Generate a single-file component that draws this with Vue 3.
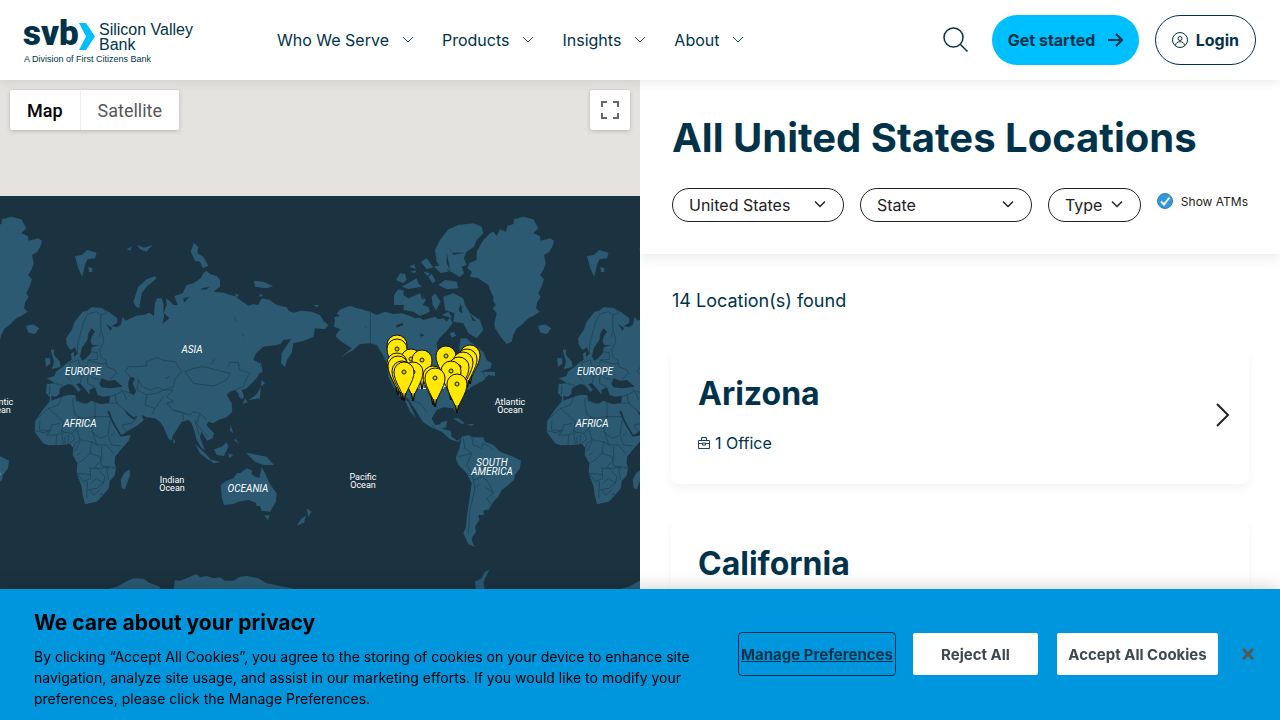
<script setup>
const nav = ['Who We Serve', 'Products', 'Insights', 'About']
const filters = [
  { id: 'country', label: 'Country', value: 'United States', cls: 'wide' },
  { id: 'state', label: 'State', value: 'State', cls: 'wide' },
  { id: 'type', label: 'Location type', value: 'Type', cls: 'narrow' },
]
const states = [
  { name: 'Arizona', offices: '1 Office', cls: '' },
  { name: 'California', offices: '', cls: 'tall' },
]
const pins = [
  [397, 345], [397, 349], [411, 359], [422, 360], [446, 356], [470, 355], [467, 359],
  [463, 362], [397, 363], [398, 366], [459, 367], [451, 371], [413, 372], [402, 371],
  [404, 372], [433, 376], [435, 378], [457, 384],
]
const worldOffsets = [-512, 0, 512]
const oceanLabels = [
  [-2, 'Atlantic', 'Ocean', 405], [510, 'Atlantic', 'Ocean', 405],
  [172, 'Indian', 'Ocean', 483], [363, 'Pacific', 'Ocean', 480],
]
const landLabels = [
  [192, 353, 'ASIA'], [83, 375, 'EUROPE'], [595, 375, 'EUROPE'], [80, 427, 'AFRICA'],
  [592, 427, 'AFRICA'], [248, 492, 'OCEANIA'], [492, 466, 'SOUTH'], [492, 475, 'AMERICA'],
  [-20, 475, 'AMERICA'], [428, 380, 'NORTH'], [428, 389, 'AMERICA'],
]
</script>

<template>
  <div class="page">
    <header class="top">
      <a class="logo" href="#" aria-label="Silicon Valley Bank home">
        <svg width="170" height="50" viewBox="0 0 170 50">
          <text class="logo-mark" x="-1" y="30">svb</text>
          <path d="M55 8h7l9 13.500-9 13.500h-7l7-13.500z" fill="#00bfff" />
          <text class="logo-name" x="75" y="20">Silicon Valley</text>
          <text class="logo-name" x="75" y="35">Bank</text>
          <text class="logo-sub" x="0" y="47">A Division of First Citizens Bank</text>
        </svg>
      </a>
      <nav class="nav">
        <button v-for="n in nav" :key="n" type="button">
          {{ n }}
          <svg width="12" height="8" viewBox="0 0 12 8"><path d="M1 1l5 5 5-5" fill="none" stroke="#1c4357" /></svg>
        </button>
      </nav>
      <div class="actions">
        <button class="search" type="button" aria-label="Search">
          <svg width="26" height="26" viewBox="0 0 26 26" fill="none" stroke="#00334a" stroke-width="1.500"><circle cx="10.500" cy="10.500" r="9.500" /><path d="M17.500 17.500l7 7" /></svg>
        </button>
        <a class="started" href="#">Get started
          <svg width="15" height="14" viewBox="0 0 15 14" fill="none" stroke="#00334a" stroke-width="2"><path d="M0 7h13M8 1l6 6-6 6" /></svg>
        </a>
        <a class="login" href="#">
          <svg width="16" height="16" viewBox="0 0 16 16" fill="none" stroke="#00334a"><circle cx="8" cy="8" r="7.500" /><circle cx="8" cy="6.500" r="2" /><path d="M3.500 13.500c0-5 9-5 9 0" /></svg>
          Login
        </a>
      </div>
    </header>

    <main class="main">
      <section class="map" aria-label="Locations map">
        <svg class="world" viewBox="0 80 640 640" preserveAspectRatio="xMidYMin slice">
          <rect x="-700" y="80" width="2040" height="116" fill="#e5e3df" />
          <rect x="-700" y="196" width="2040" height="600" fill="#1b3240" />
          <defs>
            <g id="continents">
              <g transform="translate(0 190) scale(.33333)">
                <g class="land">
                  <path d="M200 465L198 445 215 420 224 395 248 365 262 362 275 352 305 354 330 368 352 385 352 398 335 408 350 412 362 405 368 380 376 392 400 382 412 376 430 375 448 368 462 378 464 345 470 325 485 325 492 345 490 370 500 345 498 325 512 335 520 345 533 345 523 318 548 310 560 285 580 280 602 265 610 250 620 242 630 252 650 258 660 270 660 290 640 305 672 308 690 315 705 318 720 330 745 347 760 342 775 345 785 325 810 330 830 345 860 352 866 362 880 368 905 362 935 365 960 375 970 392 985 405 975 418 945 415 940 440 918 450 900 455 880 460 875 490 862 508 855 530 843 520 845 490 865 460 874 447 850 450 842 462 830 465 790 470 768 490 760 510 780 520 784 540 770 565 750 585 738 596 725 600 732 618 728 628 718 622 715 610 705 600 690 605 680 615 695 640 697 665 680 682 655 690 640 700 625 695 620 705 630 718 642 730 638 745 622 752 612 738 605 725 600 740 607 762 615 780 605 775 590 750 582 720 575 700 565 690 545 695 530 720 518 738 515 752 505 745 490 710 480 695 465 685 440 682 425 675 431 690 415 705 380 725 364 735 352 715 338 690 328 662 322 665 340 705 362 740 392 735 386 752 370 770 345 800 344 820 348 835 344 858 330 872 326 895 310 915 290 935 255 943 248 915 245 890 230 850 232 820 218 795 220 775 210 762 180 765 145 766 130 760 118 745 104 725 106 692 130 657 148 636 150 622 138 610 140 582 165 580 140 565 163 558 168 545 188 530 205 515 215 510 213 490 222 486 222 500 232 492 225 472 212 480z" />
                  <path d="M225 198L245 195 262 180 290 188 285 205 262 208 255 225 247 262 235 235zM265 232l12 2v12h-10zM400 335L415 290 440 268 465 258 470 265 440 290 425 310 418 355 408 350zM380 178l15-8-4 12zM412 165l20 8 25-8-18 20-20-8zM572 185L582 158 595 172 592 190 610 200 625 228 608 235 600 215 585 212zM762 272L790 275 820 288 800 295 765 290zM780 310l10 8-12 2zM705 310l12 5-8 8zM940 345h18l-8 7zM78 408L100 403 118 415 105 432 85 428zM152 480L162 478 162 495 180 515 182 530 155 538 162 515zM135 505L150 503 152 520 138 530zM785 570L795 580 782 590zM782 592L780 625 745 630 760 620 770 612zM735 625l8 12-15 4zM782 510L788 545 780 550zM692 705L700 730 690 722zM705 745L717 760 703 752zM642 778L665 770 680 757 685 770 672 798 650 795zM585 762L605 780 630 805 628 812 600 790zM628 808L662 816 640 820zM685 790L700 795 688 805zM738 788L760 792 800 800 822 825 790 825 765 815 750 800zM662 885L680 872 700 865 712 848 720 850 740 835 757 842 754 852 762 858 778 865 785 832 795 850 808 880 830 910 828 935 810 965 785 962 780 948 770 948 768 938 745 930 715 935 700 942 672 945 665 920zM793 975L810 977 802 990zM920 955L935 965 925 980zM890 1007L905 985 918 978 912 998zM362 870L372 850 388 838 390 855 375 898 365 895zM520 745l6 10-6 6z" />
                  <path d="M315 1200L350 1190 372 1178 400 1165 430 1166 448 1178 480 1190 478 1200 520 1200 525 1170 540 1172 560 1165 590 1152 600 1162 620 1158 640 1165 660 1162 675 1172 700 1172 720 1160 740 1158 775 1165 800 1180 860 1192 900 1200 900 1600 315 1600z" />
                </g>
                <g class="water">
                  <path d="M154 618L168 620 178 612 180 595 192 588 205 582 218 585 235 605 243 600 228 583 240 580 262 605 270 615 268 600 285 592 293 615 310 620 330 618 328 640 300 642 275 632 262 640 250 640 228 632 226 615 200 615 154 632zM298 582L305 565 325 572 345 570 368 590 330 595 305 592zM385 575L392 560 405 565 398 580 408 605 400 615 390 608 385 590zM240 500L245 475 262 450 265 430 275 415 285 425 275 440 272 455 278 466 298 465 275 472 272 490 258 505 248 512zM490 325L497 330 492 370 508 385 487 402 492 380zM372 658L400 682 414 678 402 690 382 675zM318 402l18 12-4 8zM600 298l12-5 16-2-10 8zM550 325l18-5-16 18zM640 700l12 0-8 8z" />
                </g>
                <g class="line">
                  <path d="M232 492L232 465 250 400 262 372 290 365 302 375 303 425 298 440M302 375L320 370 315 362M305 425L312 455 298 480 305 505 318 510 320 530 345 540 350 550 330 568M270 485L292 488 292 508 265 510 262 530 240 530 235 510M235 510L205 520M205 535L200 560 215 575M232 530L225 548 245 560 265 550 280 565 300 568M245 560L240 580M265 550L262 580 285 592M165 580L190 588M150 585L148 615M210 520L212 560M265 510L300 522 318 520" />
                  <path d="M390 562L376 545 385 530 410 530 440 528 440 515 470 503 495 512 525 515 545 545 525 568 520 590 490 600 475 592 450 600 425 590 415 568M555 545L580 535 610 530 650 540 690 550 680 570 640 588 580 580 555 545M685 530L690 517 715 517 718 540 750 550 738 570 730 590 705 600M495 565L510 560M415 568L412 600 440 615 470 610 490 600 520 600 500 620 520 635 500 640 520 660 570 675 580 665 600 670 620 690M440 615L435 645 465 655 490 620M465 655L455 675M415 590L395 610 370 602 345 615 328 620M345 615L350 640 375 660M360 595L372 610 380 630M330 640L355 638M600 670L590 700 605 720 625 740M585 690L598 735M520 660L548 668 550 690M380 725L365 705 395 700 410 685M632 525L645 505M705 380l3 15M725 430l8 10" />
                  <path d="M185 620L175 645 145 655M145 655L108 690M145 655L190 695 220 690M220 625L218 640 225 675 245 685 285 680 330 680M285 635L285 690M190 695L185 725 215 730 230 715 235 680M120 690L118 720 150 722 155 705 180 700M104 722L130 728 150 722M150 722L140 735 170 735 168 765M170 735L185 728 190 762M215 730L225 745 210 762M230 715L240 750 225 760 220 775M240 750L275 755 290 765 275 715 285 690M240 755L225 785M275 755L270 790 250 810 232 820M275 725L300 745 325 735 330 690M330 740L345 725M325 740L335 765 365 768M290 765L320 765 340 790M305 770L305 810 285 830M270 790L300 800 305 828 330 835M270 830L272 865 250 875 232 850M232 850L272 855M272 835L305 835 320 828 348 835M285 830L300 845 315 860 310 880 290 865 272 880M262 875L260 925M260 900L290 895 310 880M270 900L280 915 300 900M320 830L325 870M205 735v28M195 740v20M250 620L250 640M240 790L230 795M298 915l8-5 3 7" />
                </g>
              </g>
              <g transform="translate(320 190) scale(.33333)">
                <g class="land">
                  <path d="M45 390L42 382 60 378 50 370 62 358 90 347 110 355 125 358 150 365 170 375 195 365 220 372 245 370 270 378 285 385 300 383 310 390 330 385 345 380 355 388 370 385 380 395 390 382 398 400 378 425 358 445 350 460 352 480 380 482 390 500 400 520 420 500 418 470 422 445 440 445 450 455 470 470 490 485 500 510 515 520 512 535 480 545 525 545 525 558 505 555 490 572 455 590 430 610 410 640 417 665 408 668 400 655 370 652 350 660 335 685 345 705 360 703 365 695 382 693 378 712 368 718 392 722 395 740 412 752 425 742 415 756 390 748 365 725 330 710 308 695 290 665 262 625 240 620 220 590 205 560 200 520 185 490 170 465 150 460 120 462 100 480 62 502 95 475 65 455 48 440 50 430 62 418 42 410z" />
                  <path d="M252 625L265 635 288 683 270 665zM222 315L235 298 252 302 250 315 265 325 300 310 318 330 308 345 325 350 330 365 300 378 280 365 250 360 252 345 222 345zM345 180L360 150 385 118 415 105 460 100 485 110 490 130 470 150 462 170 440 185 432 205 440 225 425 230 432 250 420 262 385 240 365 235 350 215zM370 320L400 310 430 325 435 345 450 370 480 390 490 420 470 445 445 430 430 400 400 395 404 370 375 360zM228 270L240 250 255 252 260 270 250 280zM245 290L290 265 295 280 305 290 265 297zM302 215L320 205 340 232 320 238zM342 230l20 -5 25 20-25 4zM325 260l10-8 12 20-10 8zM355 285L375 270 410 275 415 295 380 298zM268 230l15-8 4 15zM335 320L345 310 362 335 348 362 338 345zM365 375l20-10 12 20zM390 430l12-5 6 12-14 6zM310 245l20 4-6 10zM270 245l20-5-5 10z" />
                  <path d="M470 185L490 150 510 130 520 125 530 138 540 118 558 125 562 108 580 102 582 88 610 80 640 88 655 115 640 130 660 138 662 152 690 145 702 152 698 168 688 185 672 195 677 220 670 240 660 255 672 268 665 290 655 308 662 322 652 335 648 355 660 365 640 378 625 385 605 405 590 415 580 435 575 455 560 462 545 445 525 415 523 400 530 370 518 355 528 345 520 335 520 320 510 300 505 285 475 265 450 260 455 245 442 235 448 220 470 210z" />
                  <path d="M425 740L445 735 460 742 490 742 495 755 520 765 540 785 580 800 603 812 600 835 585 855 582 870 565 885 545 900 535 920 520 935 508 958 490 962 492 975 475 975 478 990 465 1010 468 1025 455 1045 458 1060 465 1072 445 1062 430 1030 438 1010 440 985 448 930 455 880 440 850 415 825 407 805 418 775zM398 685L415 685 435 700 425 701zM440 702h22l-8 6zM468 1200L465 1175 485 1165 495 1145 508 1140 495 1165 490 1180 495 1200z" />
                </g>
                <g class="water">
                  <path d="M228 405l20-6 2 6-20 8zM300 430l14 6-12 4zM385 170l10 18 40 0-35 6zM380 185l10 55-10-20zM300 300l12 30-8-5zM420 340l8 30-10-5zM450 372l18 22-10-2zM415 355l15-8-10 18z" />
                </g>
                <g class="line">
                  <path d="M151 365V460L175 475 195 505M205 550L350 550 400 565 450 570M255 625L300 640 320 665M335 705L345 715M455 740L460 765 485 775 490 760 500 765 520 780M430 745L435 775 455 790 415 800M455 790L440 825 455 850 460 870 490 860 510 885 520 910 500 925 515 945 508 955M460 870L465 895 450 960 445 1030M480 880L465 895M495 890L520 910M365 715L378 712M135 408l5 6M488 545l8 18" />
                </g>
              </g>
            </g>
            <g id="pin">
              <path d="M0 29C-1 19-10 10-10 0A10 10 0 0 1 10 0C10 10 1 19 0 29z" fill="#ffe900" stroke="#111" />
              <path d="M-2 21h4L1 29h-2z" fill="#111" />
              <path d="M-1 20h2L0 26z" fill="#ffe900" />
              <circle r="2" fill="#e5d100" stroke="#111" />
            </g>
          </defs>
          <use v-for="o in worldOffsets" :key="o" href="#continents" :x="o" />
          <g class="ocean-label">
            <g v-for="l in oceanLabels" :key="l[0]">
              <text :x="l[0]" :y="l[3]">{{ l[1] }}</text>
              <text :x="l[0]" :y="l[3] + 8">{{ l[2] }}</text>
            </g>
          </g>
          <g class="land-label">
            <text v-for="(l, i) in landLabels" :key="i" :x="l[0]" :y="l[1]">{{ l[2] }}</text>
          </g>
          <use v-for="(p, i) in pins" :key="i" href="#pin" :x="p[0]" :y="p[1]" />
        </svg>
        <div class="map-types">
          <button class="on" type="button">Map</button>
          <button type="button">Satellite</button>
        </div>
        <button class="fullscreen" type="button" aria-label="Toggle fullscreen">
          <svg width="18" height="18" viewBox="0 0 18 18" fill="none" stroke="#666" stroke-width="2"><path d="M1 6V1h5M12 1h5v5M17 12v5h-5M6 17H1v-5" /></svg>
        </button>
      </section>

      <section class="panel">
        <div class="filters">
          <h1>All United States Locations</h1>
          <div class="row">
            <div v-for="f in filters" :key="f.id" class="pick" :class="f.cls">
              <select :id="f.id" :aria-label="f.label"><option>{{ f.value }}</option></select>
              <svg width="14" height="9" viewBox="0 0 14 9"><path d="M2 1.500l5 5 5-5" fill="none" stroke="#222" stroke-width="1.500" /></svg>
            </div>
            <label class="atms" for="atms">
              <span class="box">
                <input id="atms" type="checkbox" checked />
                <svg width="16" height="16" viewBox="0 0 16 16"><path d="M4 8.500l3 3 5.500-7" fill="none" stroke="#fff" stroke-width="2" /></svg>
              </span>
              Show ATMs
            </label>
          </div>
        </div>
        <p class="found">14 Location(s) found</p>
        <div class="cards">
          <a v-for="s in states" :key="s.name" class="card" :class="s.cls" href="#">
            <div class="info">
              <h2>{{ s.name }}</h2>
              <p v-if="s.offices">
                <svg width="12" height="12" viewBox="0 0 12 12" fill="none" stroke="#1c4357"><path d="M.500 3.500h11v8h-11zM3.500 3.500v-3h5v3M.500 6.500h4M7.500 6.500h4M4.500 6v2h3v-2z" /></svg>
                {{ s.offices }}
              </p>
            </div>
            <svg width="14" height="24" viewBox="0 0 14 24"><path d="M1 1l11 11L1 23" fill="none" stroke="#222" stroke-width="2" /></svg>
          </a>
        </div>
      </section>
    </main>

    <aside class="cookies" aria-label="Privacy">
      <div class="copy">
        <h3>We care about your privacy</h3>
        <p>By clicking “Accept All Cookies”, you agree to the storing of cookies on your device to enhance site navigation, analyze site usage, and assist in our marketing efforts. If you would like to modify your preferences, please click the Manage Preferences.</p>
      </div>
      <div class="choices">
        <button class="manage" type="button">Manage Preferences</button>
        <button class="reject" type="button">Reject All</button>
        <button class="accept" type="button">Accept All Cookies</button>
        <button class="close" type="button" aria-label="Close">
          <svg width="12" height="12" viewBox="0 0 12 12"><path d="M1 1l10 10M11 1L1 11" stroke="#565656" stroke-width="3" /></svg>
        </button>
      </div>
    </aside>
  </div>
</template>

<style>
body { margin: 0; }
</style>

<style scoped>
* { box-sizing: border-box; }
.page { height: 100vh; display: flex; flex-direction: column; overflow: hidden; background: #fff; color: #00334a; font-family: Inter, "Liberation Sans", sans-serif; }
button { font: inherit; color: inherit; background: none; border: 0; padding: 0; cursor: pointer; }
a { color: inherit; text-decoration: none; }
h1, h2, h3, p { margin: 0; }
svg { display: block; flex: none; }

.top { flex: none; height: 80px; display: flex; align-items: center; padding: 0 24px; background: #fff; box-shadow: 0 0 12px rgba(0, 0, 0, .12); z-index: 2; }
.logo { flex: none; width: 253px; }
.logo svg { overflow: visible; }
.logo text { font-family: "Liberation Sans", Arial, sans-serif; fill: #00334a; }
.logo .logo-mark { font-family: Roboto, sans-serif; font-size: 35px; font-weight: 900; }
.logo .logo-name { font-size: 16px; }
.logo .logo-sub { font-size: 9px; }
.nav { display: flex; gap: 28px; font-size: 16px; }
.nav button { display: flex; align-items: center; gap: 13px; }
.actions { margin-left: auto; display: flex; align-items: center; gap: 16px; font-size: 16px; font-weight: 700; }
.search { margin-right: 7px; }
.started, .login { height: 50px; border-radius: 25px; padding: 0 16px; display: flex; align-items: center; gap: 8px; }
.started { min-width: 147px; justify-content: space-between; background: #00bfff; }
.login { border: 1px solid #00334a; }

.main { flex: 1; min-height: 0; display: grid; grid-template-columns: 1fr 1fr; }
.map { position: relative; overflow: hidden; background: #1b3240; }
.world { width: 100%; height: 100%; }
.land { fill: #2b5a72; }
.water { fill: #1b3240; }
.line { fill: none; stroke: #1b3c4e; stroke-width: 2; }
.ocean-label, .land-label { font-family: Roboto, sans-serif; fill: #fff; text-anchor: middle; }
.ocean-label { font-size: 9px; }
.land-label { font-size: 10px; font-style: italic; }
.map-types { position: absolute; left: 10px; top: 10px; display: flex; height: 40px; background: #fff; border-radius: 2px; box-shadow: 0 1px 4px rgba(0, 0, 0, .2); font-family: Roboto, sans-serif; font-size: 18px; color: #565656; }
.map-types button { padding: 0 17px; }
.map-types .on { color: #000; font-weight: 500; border-right: 1px solid #eee; }
.fullscreen { position: absolute; right: 10px; top: 10px; width: 40px; height: 40px; display: grid; place-items: center; background: #fff; border-radius: 2px; box-shadow: 0 1px 4px rgba(0, 0, 0, .2); }

.panel { min-width: 0; overflow: hidden; }
.filters { padding: 32px; box-shadow: 0 4px 12px rgba(0, 0, 0, .08); }
h1 { font-size: 40px; line-height: 52px; font-weight: 700; }
.row { display: flex; gap: 16px; margin-top: 24px; }
.pick { position: relative; height: 34px; }
.pick.wide { flex: 0 1 172px; }
.pick.narrow { flex: 0 1 93px; }
.pick select { width: 100%; height: 100%; appearance: none; border: 1px solid #222; border-radius: 17px; background: #fff; padding: 0 16px; font: 16px Inter, sans-serif; color: #222; }
.pick svg { position: absolute; right: 17px; top: 12px; pointer-events: none; }
.atms { display: flex; align-items: center; gap: 8px; height: 26px; font-size: 12px; color: #222; white-space: nowrap; }
.box { position: relative; width: 16px; height: 16px; }
.box input { appearance: none; display: block; margin: 0; width: 16px; height: 16px; border-radius: 50%; background: #3498db; border: 1px solid #2980b9; }
.box svg { position: absolute; left: 0; top: 0; pointer-events: none; }
.found { padding: 34px 32px 0; font-size: 18px; line-height: 26px; }
.cards { display: grid; gap: 32px; padding: 32px 31px; }
.card { min-height: 136px; padding: 0 19px 0 27px; display: flex; align-items: center; justify-content: space-between; border-radius: 8px; box-shadow: 0 6px 8px rgba(0, 0, 0, .04); }
.card.tall { min-height: 180px; }
.info { align-self: flex-start; padding: 28px 0; }
h2 { font-size: 32px; line-height: 40px; font-weight: 700; }
.card p { display: flex; align-items: center; gap: 5px; margin-top: 16px; font-size: 16px; line-height: 26px; }

.cookies { position: fixed; left: 0; right: 0; bottom: 0; z-index: 3; min-height: 131px; display: flex; align-items: flex-start; justify-content: space-between; background: #0096dd; color: #000; box-shadow: 0 0 18px rgba(0, 0, 0, .2); padding: 18px 26px 10px 34px; }
.copy { flex: 0 1 670px; }
h3 { font-size: 21px; line-height: 32px; font-weight: 700; }
.copy p { margin-top: 7px; font-size: 14px; line-height: 21px; }
.choices { flex: none; display: flex; align-items: center; margin-top: 25px; color: #3c4950; font-size: 15px; font-weight: 700; }
.choices button { height: 42px; border-radius: 2px; white-space: nowrap; }
.choices .manage { width: 158px; height: 44px; border: 1px solid #00334a; border-radius: 4px; color: #00334a; text-decoration: underline; margin-right: 17px; }
.choices .reject { width: 125px; background: #fff; margin-right: 19px; }
.choices .accept { width: 161px; background: #fff; margin-right: 24px; }
.close { display: grid; place-items: center; }
</style>
